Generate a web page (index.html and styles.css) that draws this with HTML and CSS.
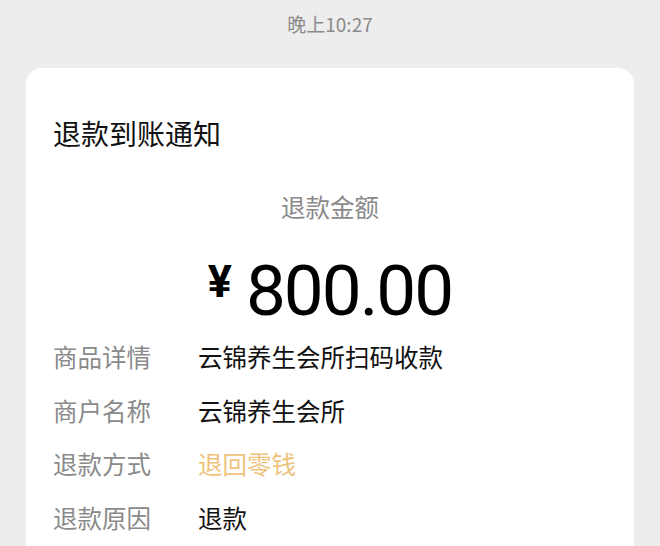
FILE: index.html
```html
<!DOCTYPE html>
<html lang="zh">
<head>
<meta charset="utf-8">
<link rel="stylesheet" href="styles.css">
</head>
<body>
<div class="time">晚上10:27</div>
<div class="card">
  <div class="title">退款到账通知</div>
  <div class="amount-label">退款金额</div>
  <div class="amount"><span class="yen">¥</span><span class="num">800.00</span></div>
  <div class="rows">
    <div class="row"><span class="label">商品详情</span><span class="value">云锦养生会所扫码收款</span></div>
    <div class="row"><span class="label">商户名称</span><span class="value">云锦养生会所</span></div>
    <div class="row"><span class="label">退款方式</span><span class="value gold">退回零钱</span></div>
    <div class="row"><span class="label">退款原因</span><span class="value">退款</span></div>
  </div>
</div>
</body>
</html>
```
FILE: styles.css
```css
html, body {
  margin: 0;
  padding: 0;
  background: #ededed;
  font-family: "Noto Sans CJK SC", "Noto Sans", Roboto, sans-serif;
  overflow: hidden;
}
.time {
  height: 48px;
  line-height: 48px;
  text-align: center;
  font-size: 19px;
  color: #8a8a8a;
}
.card {
  margin: 20px 26px 0;
  background: #fff;
  border-radius: 16px;
  padding: 46px 27px 40px;
  min-height: 600px;
}
.title {
  font-size: 28px;
  line-height: 38px;
  color: #111;
}
.amount-label {
  margin-top: 38px;
  text-align: center;
  font-size: 24.5px;
  line-height: 34px;
  color: #8a8a8a;
}
.amount {
  margin-top: 18px;
  text-align: center;
  color: #000;
  line-height: 80px;
  height: 80px;
}
.yen {
  font-family: Roboto, "Noto Sans", sans-serif;
  font-weight: 700;
  font-size: 45px;
  margin-right: 14px;
  vertical-align: 18px;
}
.num {
  font-family: Roboto, "Noto Sans", sans-serif;
  font-size: 71px;
  letter-spacing: -2px;
}
.rows {
  margin-top: 8px;
  display: flex;
  flex-direction: column;
}
.row {
  display: flex;
  height: 53.5px;
  align-items: center;
  font-size: 24.5px;
}
.label {
  width: 145px;
  color: #8a8a8a;
}
.value {
  color: #111;
}
.gold {
  color: #efc27b;
}
```
